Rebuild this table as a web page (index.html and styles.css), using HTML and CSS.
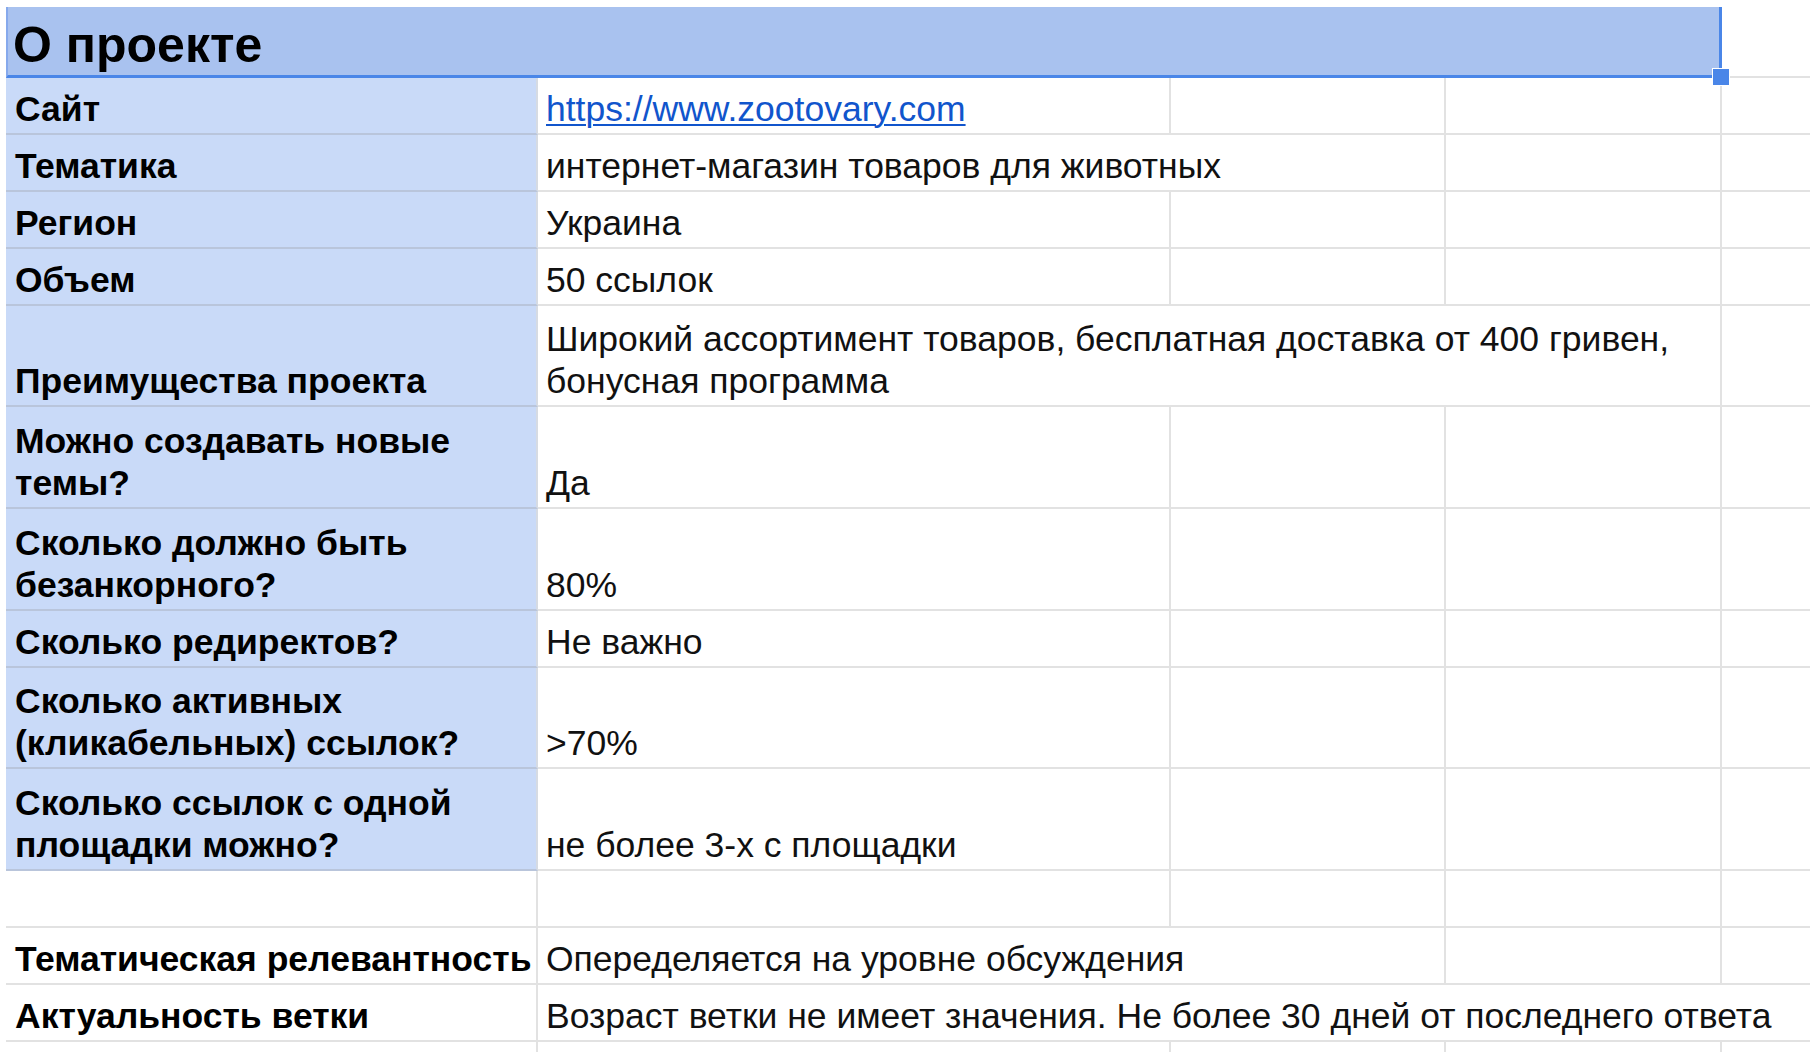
FILE: index.html
```html
<!DOCTYPE html>
<html lang="ru">
<head>
<meta charset="utf-8">
<title>О проекте</title>
<link rel="stylesheet" href="styles.css">
</head>
<body>
<div class="sheet">
  <div class="grid">
    <div class="cell head span4"><span>О проекте</span><i class="handle"></i></div>
    <div class="cell e"></div>

    <div class="cell lab">Сайт</div>
    <div class="cell"><a class="link" href="#">https://www.zootovary.com</a></div>
    <div class="cell"></div><div class="cell"></div><div class="cell e"></div>

    <div class="cell lab">Тематика</div>
    <div class="cell span2">интернет-магазин товаров для животных</div>
    <div class="cell"></div><div class="cell e"></div>

    <div class="cell lab">Регион</div>
    <div class="cell">Украина</div>
    <div class="cell"></div><div class="cell"></div><div class="cell e"></div>

    <div class="cell lab">Объем</div>
    <div class="cell">50 ссылок</div>
    <div class="cell"></div><div class="cell"></div><div class="cell e"></div>

    <div class="cell lab">Преимущества проекта</div>
    <div class="cell span3">Широкий ассортимент товаров, бесплатная доставка от 400 гривен,<br>бонусная программа</div>
    <div class="cell e"></div>

    <div class="cell lab">Можно создавать новые<br>темы?</div>
    <div class="cell">Да</div>
    <div class="cell"></div><div class="cell"></div><div class="cell e"></div>

    <div class="cell lab">Сколько должно быть<br>безанкорного?</div>
    <div class="cell">80%</div>
    <div class="cell"></div><div class="cell"></div><div class="cell e"></div>

    <div class="cell lab">Сколько редиректов?</div>
    <div class="cell">Не важно</div>
    <div class="cell"></div><div class="cell"></div><div class="cell e"></div>

    <div class="cell lab">Сколько активных<br>(кликабельных) ссылок?</div>
    <div class="cell">&gt;70%</div>
    <div class="cell"></div><div class="cell"></div><div class="cell e"></div>

    <div class="cell lab">Сколько ссылок с одной<br>площадки можно?</div>
    <div class="cell">не более 3-х с площадки</div>
    <div class="cell"></div><div class="cell"></div><div class="cell e"></div>

    <div class="cell plain"></div>
    <div class="cell"></div>
    <div class="cell"></div><div class="cell"></div><div class="cell e"></div>

    <div class="cell plain">Тематическая релевантность</div>
    <div class="cell span2">Опеределяется на уровне обсуждения</div>
    <div class="cell"></div><div class="cell e"></div>

    <div class="cell plain">Актуальность ветки</div>
    <div class="cell span4 e">Возраст ветки не имеет значения. Не более 30 дней от последнего ответа</div>

    <div class="cell plain"></div>
    <div class="cell"></div>
    <div class="cell"></div><div class="cell"></div><div class="cell e"></div>
  </div>
</div>
</body>
</html>
```

FILE: styles.css
```css
html, body {
  margin: 0;
  padding: 0;
  background: #ffffff;
}

.sheet {
  padding: 7px 0 0 6px;
  font-family: "Liberation Sans", Arial, sans-serif;
  color: #111111;
  overflow: hidden;
  height: 1045px;
}

.grid {
  display: grid;
  grid-template-columns: 532px 633px 275px 276px 88px;
  grid-template-rows: 71px 57px 57px 57px 57px 101px 102px 102px 57px 101px 102px 57px 57px 57px 57px;
}

.cell {
  box-sizing: border-box;
  display: flex;
  align-items: flex-end;
  min-width: 0;
  padding: 0 6px 3px 8px;
  border-right: 2px solid #e2e2e2;
  border-bottom: 2px solid #e2e2e2;
  font-size: 35.5px;
  line-height: 42px;
  white-space: nowrap;
  position: relative;
}

.cell.e {
  border-right: none;
}

.span2 { grid-column: span 2; }
.span3 { grid-column: span 3; }
.span4 { grid-column: span 4; }

.lab,
.plain {
  font-weight: bold;
  padding-left: 9px;
  color: #000000;
}

.lab {
  background: #c9daf8;
  border-bottom-color: #b9c5db;
  border-right-color: #d6dbe3;
}

.head {
  background: #a9c2ef;
  border-left: 2px solid #86a9ec;
  border-right: 3px solid #4a86e8;
  border-bottom: 3px solid #4a86e8;
  padding: 0 0 5px 5px;
  font-size: 50px;
  line-height: 50px;
  font-weight: bold;
  color: #000000;
}

.handle {
  position: absolute;
  right: -11px;
  bottom: -11px;
  width: 16px;
  height: 16px;
  background: #4a86e8;
  border: 1px solid #ffffff;
  z-index: 2;
}

.link {
  color: #1155cc;
  text-decoration: underline;
  text-decoration-thickness: 2px;
  text-underline-offset: 3px;
}
```
